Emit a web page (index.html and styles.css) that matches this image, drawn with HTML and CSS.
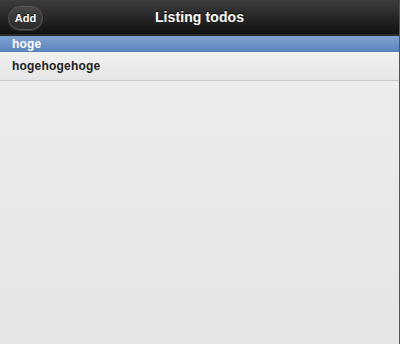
FILE: index.html
```html
<!DOCTYPE html>
<html>
<head>
  <title>Listing todos</title>
  <link rel="stylesheet" href="styles.css">
</head>
<body>
  <div class="page">
    <div class="header">
      <a class="btn-add" href="#">Add</a>
      <h1>Listing todos</h1>
    </div>
    <ul class="todo-list">
      <li class="todo active">hoge</li>
      <li class="todo">hogehogehoge</li>
    </ul>
  </div>
</body>
</html>
```

FILE: styles.css
```css
* {
  margin: 0;
  padding: 0;
  box-sizing: border-box;
}

html, body {
  height: 100%;
}

body {
  font-family: Helvetica, "Liberation Sans", Arial, sans-serif;
  background: #e9e9e9;
}

.page {
  height: 100%;
  background: linear-gradient(#eeeeee, #e5e5e5);
  border-right: 1px solid #4b5170;
}

.header {
  position: relative;
  height: 36px;
  background: linear-gradient(#3d3d3d, #111111);
  border-bottom: 2px solid #2a2a2a;
  display: flex;
  align-items: center;
  justify-content: center;
}

.header h1 {
  color: #fff;
  font-size: 14px;
  font-weight: 700;
  letter-spacing: 0.1px;
  text-shadow: 0 -1px 0 #000;
}

.btn-add {
  position: absolute;
  left: 8px;
  top: 6px;
  height: 24px;
  width: 35px;
  display: flex;
  align-items: center;
  justify-content: center;
  border-radius: 12px;
  background: linear-gradient(#464646, #2a2a2a);
  border: 1px solid #565656;
  box-shadow: 0 1px 0 rgba(255, 255, 255, 0.15);
  color: #fff;
  font-size: 11px;
  font-weight: 700;
  text-decoration: none;
  text-shadow: 0 -1px 0 #000;
}

.todo-list {
  list-style: none;
}

.todo {
  height: 29px;
  padding: 0 12px 1px;
  display: flex;
  align-items: center;
  font-size: 12px;
  font-weight: 700;
  letter-spacing: 0.2px;
  color: #222;
  background: linear-gradient(#f0f0f0, #e6e6e6);
  border-bottom: 1px solid #c8c8c8;
}

.todo.active {
  height: 16px;
  padding-bottom: 0;
  color: #fff;
  background: linear-gradient(#7ea2d2, #5e86bf);
  border-bottom: 1px solid #5a7fb5;
}
```
